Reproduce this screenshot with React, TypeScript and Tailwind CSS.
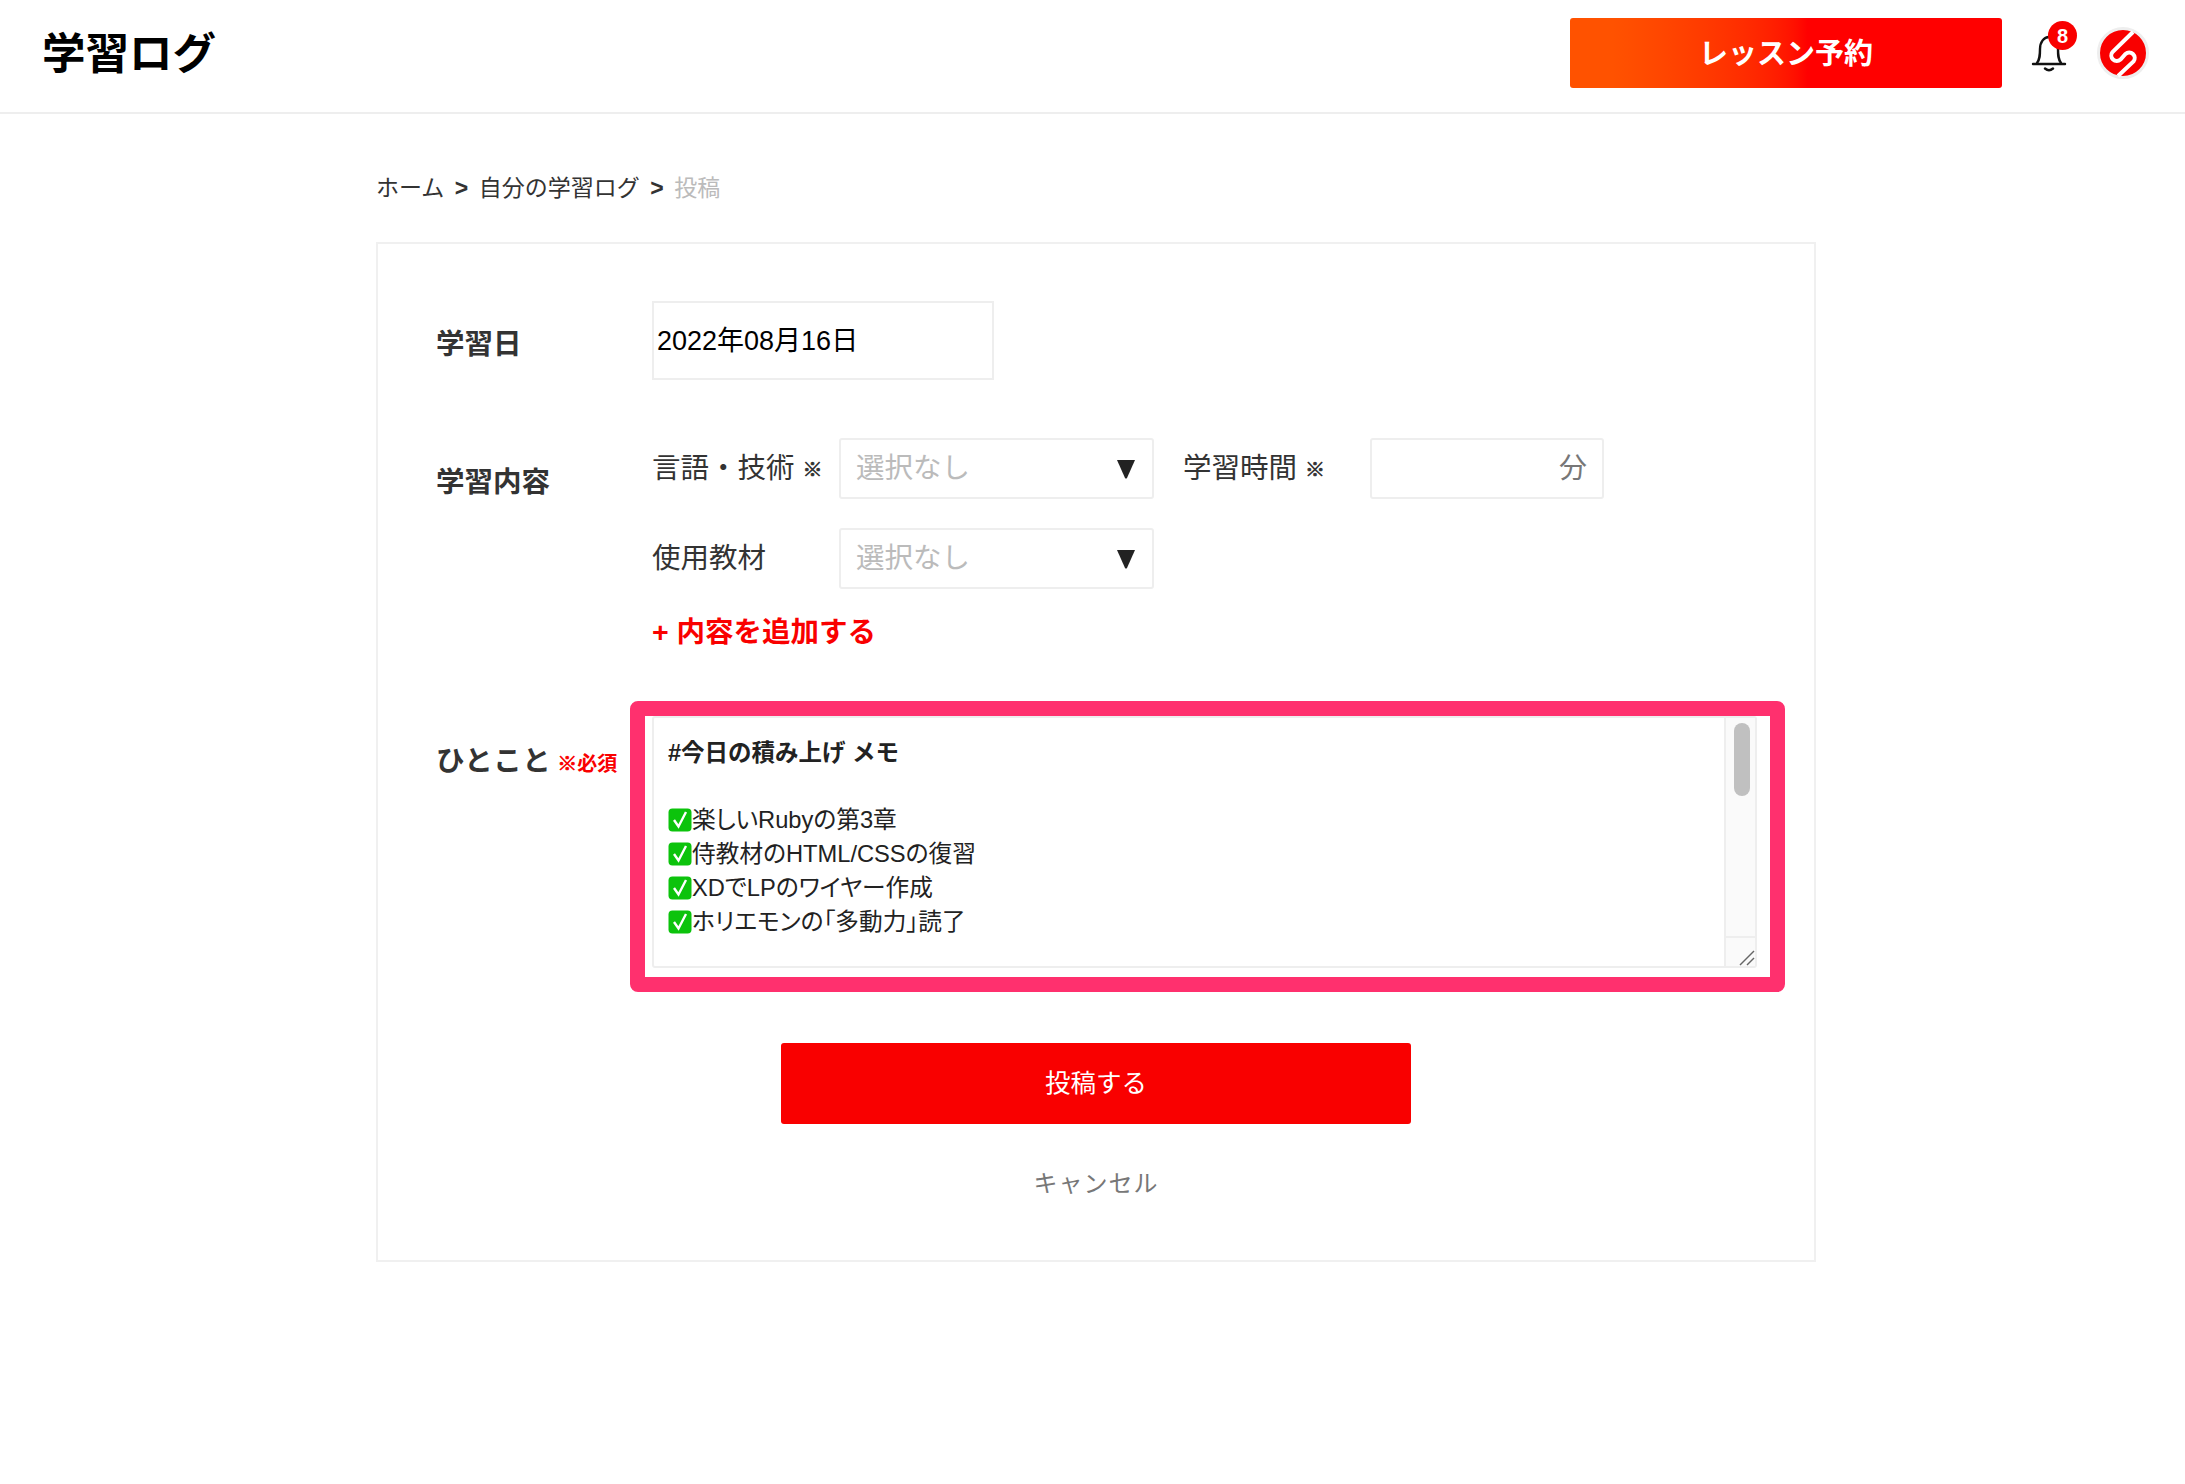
import React from 'react';

const checkLines = [
  '楽しいRubyの第3章',
  '侍教材のHTML/CSSの復習',
  'XDでLPのワイヤー作成',
  'ホリエモンの「多動力」読了',
];

const Triangle = () => (
  <svg width="20" height="20" viewBox="0 0 20 20">
    <path d="M1 1 H19 L11 19 Q10 20 9 19 Z" fill="#222" />
  </svg>
);

const CheckEmoji = () => (
  <svg width="24" height="24" viewBox="0 0 24 24" className="shrink-0">
    <rect x="0.5" y="0.5" width="23" height="23" rx="4" fill="#0cc30c" />
    <path d="M6 12 L10.5 18.5 L18 4" fill="none" stroke="#fff" strokeWidth="2.4" />
  </svg>
);

const Bell = () => (
  <svg width="36" height="38" viewBox="0 0 36 38" fill="none" stroke="#111" strokeWidth="2.4" strokeLinecap="round">
    <path d="M2 29 H34" />
    <path d="M6 28 C9 24 9 20 9 14 C9 7 13 2 18 2 C23 2 27 7 27 14 C27 20 27 24 30 28" />
    <path d="M14 33.5 Q18 37 22 33.5" />
  </svg>
);

const Logo = () => (
  <svg width="52" height="52" viewBox="0 0 52 52">
    <circle cx="26" cy="26" r="24.5" fill="#f90000" stroke="#eeeeee" strokeWidth="3" />
    <path d="M36 5 L15.5 25 A5.5 5.5 0 0 0 23.5 32.5 L28.5 27 A5.5 5.5 0 0 1 36.5 34.5 L21 49" fill="none" stroke="#fff" strokeWidth="4" />
  </svg>
);

const SelectBox = () => (
  <div className="w-[315px] h-[61px] border-2 border-[#eeeeee] rounded-[3px] flex items-center justify-between pl-[15px] pr-[16px]">
    <span className="text-[28.5px] text-[#bbbbbb]">選択なし</span>
    <Triangle />
  </div>
);

const Mark = () => (
  <span className="ml-[8px] text-[20px] font-bold text-[#333333] font-['Noto_Sans_CJK_JP',sans-serif] [-webkit-text-stroke:0.7px_#333333]">※</span>
);

export default function App() {
  return (
    <div className="min-h-[1484px] bg-white text-[#333333] font-['Liberation_Sans','Noto_Sans_CJK_JP',sans-serif]">
      {/* Header */}
      <header className="h-[114px] border-b-2 border-[#eeeeee] flex items-center pl-[42px] pb-[6px]">
        <h1 className="text-[43.5px] font-bold text-black leading-none pt-[3px]">学習ログ</h1>
        <div className="ml-auto flex items-center">
          <button className="w-[432px] h-[70px] rounded-[3px] pt-[3px] bg-gradient-to-r from-[#ff5200] from-10% to-[#ff0000] to-55% text-white text-[29px] font-bold">
            レッスン予約
          </button>
          <div className="relative ml-[29px] mt-[2px] w-[36px] h-[38px]">
            <Bell />
            <span className="absolute -top-[14px] left-[17px] w-[29px] h-[29px] rounded-full bg-[#f90000] text-white text-[20px] font-bold flex items-center justify-center">
              8
            </span>
          </div>
          <div className="ml-[30px] mr-[36px] w-[52px] h-[52px]">
            <Logo />
          </div>
        </div>
      </header>

      <main className="ml-[376px] w-[1440px]">
        {/* Breadcrumb */}
        <nav className="h-[128px] flex items-center gap-[10.5px] pt-[20px] text-[23px]">
          <span>ホーム</span>
          <span className="font-bold">&gt;</span>
          <span>自分の学習ログ</span>
          <span className="font-bold">&gt;</span>
          <span className="text-[#bbbbbb]">投稿</span>
        </nav>

        {/* Form card */}
        <section className="h-[1020px] border-2 border-[#f0f0f0] pl-[58px] pt-[57px]">
          <div className="flex">
            <div className="w-[216px] pt-[29px] text-[28.5px] font-bold leading-none">学習日</div>
            <div className="w-[342px] h-[79px] border-2 border-[#eeeeee] flex items-center pl-[3px] pt-[2px] text-[27px] text-black">
              2022年08月16日
            </div>
          </div>

          <div className="flex mt-[58px]">
            <div className="w-[216px] pt-[30px] text-[28.5px] font-bold leading-none">学習内容</div>
            <div>
              <div className="flex items-center">
                <div className="w-[187px] text-[28.5px] flex items-center">
                  言語・技術<Mark />
                </div>
                <SelectBox />
                <div className="w-[216px] pl-[29px] text-[28.5px] flex items-center">
                  学習時間<Mark />
                </div>
                <div className="w-[234px] h-[61px] border-2 border-[#eeeeee] rounded-[3px] flex items-center justify-end pr-[15px] text-[28px] text-[#777777]">
                  分
                </div>
              </div>
              <div className="flex items-center mt-[29px]">
                <div className="w-[187px] text-[28.5px]">使用教材</div>
                <SelectBox />
              </div>
              <div className="mt-[26px] text-[28.5px] font-bold text-[#f90000] leading-[34px]">+ 内容を追加する</div>
            </div>
          </div>

          <div className="flex mt-[67px]">
            <div className="w-[216px] pt-[31px] flex items-baseline leading-none">
              <span className="text-[28.5px] font-bold tracking-[0.5px]">ひとこと</span>
              <span className="ml-[6px] text-[20px] font-bold text-[#f90000] font-['Noto_Sans_CJK_JP',sans-serif]">
                <span className="[-webkit-text-stroke:0.7px_#f90000]">※</span>必須
              </span>
            </div>
            <div className="relative w-[1105px] h-[252px] border-2 border-[#eeeeee] rounded-[3px] flex">
              <div className="flex-1 pl-[14px] pt-[18px] text-[23.7px] leading-[34px] text-[#222222]">
                <div className="font-bold text-[23.5px]">#今日の積み上げ メモ</div>
                <div className="h-[33px]" />
                {checkLines.map((line) => (
                  <div key={line} className="flex items-center [font-feature-settings:'palt']">
                    <CheckEmoji />
                    {line}
                  </div>
                ))}
              </div>
              <div className="w-[31px] border-l-2 border-[#eeeeee] bg-[#fafafa] flex flex-col">
                <div className="flex-1 pt-[5px] pl-[8px]">
                  <div className="w-[16px] h-[73px] rounded-full bg-[#c0c0c0]" />
                </div>
                <div className="relative h-[30px] -ml-[2px] border-l-2 border-t-2 border-[#eeeeee]">
                  <svg width="16" height="16" viewBox="0 0 16 16" className="absolute right-0 bottom-0" stroke="#666" strokeWidth="1.4">
                    <path d="M1 15 L15 1" />
                    <path d="M8 15 L15 8" />
                  </svg>
                </div>
              </div>
              {/* highlight frame */}
              <div className="absolute -left-[24px] -top-[17px] w-[1155px] h-[291px] border-[15px] border-[#ff306e] rounded-[8px] pointer-events-none" />
            </div>
          </div>

          <div className="w-[630px] ml-[345px] mt-[75px]">
            <button className="w-full h-[81px] rounded-[3px] bg-[#f90000] text-white text-[25.5px]">投稿する</button>
            <div className="mt-[45px] text-center text-[24px] tracking-[1px] text-[#777777] leading-[30px]">キャンセル</div>
          </div>
        </section>
      </main>
    </div>
  );
}
